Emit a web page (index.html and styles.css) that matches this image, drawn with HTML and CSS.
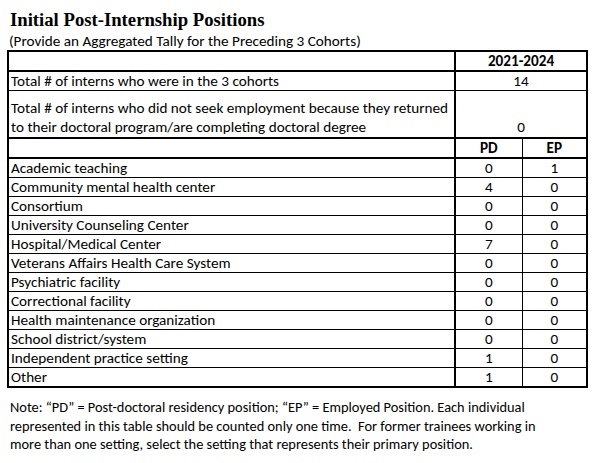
FILE: index.html
```html
<!DOCTYPE html>
<html>
<head>
<meta charset="utf-8">
<link rel="stylesheet" href="styles.css">
</head>
<body>
<div class="page">
  <h1 class="title">Initial Post-Internship Positions</h1>
  <div class="subtitle">(Provide an Aggregated Tally for the Preceding 3 Cohorts)</div>
  <table class="tally">
    <colgroup><col class="c-label"><col class="c-pd"><col class="c-ep"></colgroup>
    <tr class="r-head thick-bottom">
      <td class="label"></td>
      <td class="val bold" colspan="2">2021-2024</td>
    </tr>
    <tr class="r-row">
      <td class="label">Total # of interns who were in the 3 cohorts</td>
      <td class="val" colspan="2">14</td>
    </tr>
    <tr class="r-tall thick-bottom">
      <td class="label">Total # of interns who did not seek employment because they returned<br>to their doctoral program/are completing doctoral degree</td>
      <td class="val" colspan="2">0</td>
    </tr>
    <tr class="r-sub thick-bottom">
      <td class="label"></td>
      <td class="val bold">PD</td>
      <td class="val bold">EP</td>
    </tr>
    <tr class="r-row"><td class="label">Academic teaching</td><td class="val">0</td><td class="val">1</td></tr>
    <tr class="r-row"><td class="label">Community mental health center</td><td class="val">4</td><td class="val">0</td></tr>
    <tr class="r-row"><td class="label">Consortium</td><td class="val">0</td><td class="val">0</td></tr>
    <tr class="r-row"><td class="label">University Counseling Center</td><td class="val">0</td><td class="val">0</td></tr>
    <tr class="r-row"><td class="label">Hospital/Medical Center</td><td class="val">7</td><td class="val">0</td></tr>
    <tr class="r-row"><td class="label">Veterans Affairs Health Care System</td><td class="val">0</td><td class="val">0</td></tr>
    <tr class="r-row"><td class="label">Psychiatric facility</td><td class="val">0</td><td class="val">0</td></tr>
    <tr class="r-row"><td class="label">Correctional facility</td><td class="val">0</td><td class="val">0</td></tr>
    <tr class="r-row"><td class="label">Health maintenance organization</td><td class="val">0</td><td class="val">0</td></tr>
    <tr class="r-row"><td class="label">School district/system</td><td class="val">0</td><td class="val">0</td></tr>
    <tr class="r-row"><td class="label">Independent practice setting</td><td class="val">1</td><td class="val">0</td></tr>
    <tr class="r-row"><td class="label">Other</td><td class="val">1</td><td class="val">0</td></tr>
  </table>
  <p class="note">Note: “PD” = Post-doctoral residency position; “EP” = Employed Position. Each individual<br>represented in this table should be counted only one time.&nbsp; For former trainees working in<br>more than one setting, select the setting that represents their primary position.</p>
</div>
</body>
</html>
```
FILE: styles.css
```css
html, body {
  margin: 0;
  padding: 0;
  background: #fff;
}
.page {
  padding: 8px 0 0 7px;
  width: 581px;
  font-family: Carlito, Lato, "Liberation Sans", sans-serif;
  font-size: 15.2px;
  color: #000;
}
.title {
  margin: 0 0 0 3px;
  font-family: "Liberation Serif", "Times New Roman", serif;
  font-weight: bold;
  font-size: 18.7px;
  line-height: 24px;
}
.subtitle {
  margin-left: 2px;
  line-height: 18px;
  height: 18px;
}
.tally {
  border-collapse: collapse;
  border: 2px solid #000;
  table-layout: fixed;
  width: 581px;
}
.c-label { width: 447px; }
.c-pd { width: 67px; }
.c-ep { width: 65px; }
.tally td {
  border: 1px solid #000;
  padding: 0 2px 0 2px;
  vertical-align: bottom;
  line-height: 18px;
  height: 18px;
  white-space: nowrap;
}
.tally td.label { border-right: 2px solid #000; }
.tally td.val { text-align: center; }
.tally .bold { font-weight: bold; }
.thick-bottom td { border-bottom: 2px solid #000; }
.r-tall td { height: 46px; line-height: 19px; }
.note {
  margin: 10px 0 0 3px;
  font-size: 14.4px;
  line-height: 18.5px;
  white-space: nowrap;
}
```
